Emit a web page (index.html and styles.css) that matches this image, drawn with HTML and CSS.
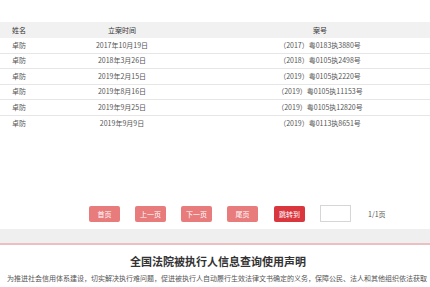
FILE: index.html
```html
<!DOCTYPE html>
<html lang="zh-CN">
<head>
<meta charset="utf-8">
<title>被执行人信息</title>
<link rel="stylesheet" href="styles.css">
</head>
<body>
<div class="page">
  <div class="table">
    <div class="row head">
      <div class="c-name">姓名</div>
      <div class="c-date">立案时间</div>
      <div class="c-case">案号</div>
    </div>
    <div class="row">
      <div class="c-name">卓防</div>
      <div class="c-date">2017年10月19日</div>
      <div class="c-case">（2017）粤0183执3880号</div>
    </div>
    <div class="row">
      <div class="c-name">卓防</div>
      <div class="c-date">2018年3月26日</div>
      <div class="c-case">（2018）粤0105执2498号</div>
    </div>
    <div class="row">
      <div class="c-name">卓防</div>
      <div class="c-date">2019年2月15日</div>
      <div class="c-case">（2019）粤0105执2220号</div>
    </div>
    <div class="row">
      <div class="c-name">卓防</div>
      <div class="c-date">2019年8月16日</div>
      <div class="c-case">（2019）粤0105执11153号</div>
    </div>
    <div class="row">
      <div class="c-name">卓防</div>
      <div class="c-date">2019年9月25日</div>
      <div class="c-case">（2019）粤0105执12820号</div>
    </div>
    <div class="row last">
      <div class="c-name">卓防</div>
      <div class="c-date">2019年9月9日</div>
      <div class="c-case">（2019）粤0113执8651号</div>
    </div>
  </div>

  <div class="pager">
    <span class="btn">首页</span>
    <span class="btn">上一页</span>
    <span class="btn">下一页</span>
    <span class="btn">尾页</span>
    <span class="btn go">跳转到</span>
    <span class="input"></span>
    <span class="count">1/1页</span>
  </div>

  <div class="band"></div>

  <div class="notice">
    <h2 class="title">全国法院被执行人信息查询使用声明</h2>
    <p class="text">为推进社会信用体系建设，切实解决执行难问题，促进被执行人自动履行生效法律文书确定的义务，保障公民、法人和其他组织依法获取</p>
  </div>
</div>
</body>
</html>
```

FILE: styles.css
```css
html, body {
  margin: 0;
  padding: 0;
  background: #fff;
  overflow: hidden;
}
body {
  font-family: "Noto Sans CJK SC", "Noto Sans", sans-serif;
  color: #555;
  width: 430px;
  height: 287px;
}
.page {
  width: 430px;
  overflow: hidden;
}
.table {
  width: 460px;
  padding-top: 22px;
}
.row {
  display: grid;
  grid-template-columns: 60px 124px 276px;
  align-items: center;
  height: 15.5px;
  border-bottom: 1px solid #e6e6e6;
  box-sizing: border-box;
  font-size: 7px;
  line-height: 1;
}
.row.head {
  height: 16px;
  background: #f1f1f1;
  color: #333;
  border-bottom: none;
}
.row.last {
  border-bottom: none;
}
.c-name {
  padding-left: 12px;
}
.c-date {
  text-align: center;
}
.c-case {
  text-align: center;
  padding-right: 4px;
}
.pager {
  display: flex;
  align-items: center;
  margin-top: 74px;
  padding-left: 89px;
  height: 17px;
  font-size: 7px;
}
.btn {
  width: 31px;
  height: 16px;
  line-height: 16px;
  text-align: center;
  background: #e87b7b;
  color: #fff;
  border-radius: 2px;
  margin-right: 15px;
}
.btn.go {
  background: #d9363e;
  margin-left: 1px;
}
.input {
  width: 31px;
  height: 17px;
  box-sizing: border-box;
  border: 1px solid #d6d6d6;
  margin-right: 17px;
}
.count {
  color: #555;
}
.band {
  margin-top: 7px;
  height: 14px;
  background: #efefef;
  border-bottom: 2px solid #ecc0c0;
}
.notice {
  padding-top: 9px;
}
.title {
  margin: 0;
  text-align: center;
  font-size: 11px;
  font-weight: bold;
  color: #333;
  line-height: 14px;
  padding-left: 6px;
}
.text {
  margin: 6px 0 0 7px;
  font-size: 7px;
  line-height: 9px;
  white-space: nowrap;
  color: #555;
}
```
